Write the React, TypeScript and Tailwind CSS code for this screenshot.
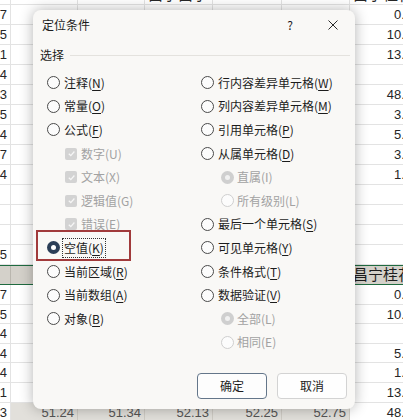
import React from "react";

type Opt = {
  t: string;
  k: string;
  type?: "radio" | "check" | "sub";
  disabled?: boolean;
  checked?: boolean;
  focus?: boolean;
};

const leftOpts: Opt[] = [
  { t: "注释", k: "N" },
  { t: "常量", k: "O" },
  { t: "公式", k: "F" },
  { t: "数字", k: "U", type: "check", disabled: true },
  { t: "文本", k: "X", type: "check", disabled: true },
  { t: "逻辑值", k: "G", type: "check", disabled: true },
  { t: "错误", k: "E", type: "check", disabled: true },
  { t: "空值", k: "K", checked: true, focus: true },
  { t: "当前区域", k: "R" },
  { t: "当前数组", k: "A" },
  { t: "对象", k: "B" },
];

const rightOpts: Opt[] = [
  { t: "行内容差异单元格", k: "W" },
  { t: "列内容差异单元格", k: "M" },
  { t: "引用单元格", k: "P" },
  { t: "从属单元格", k: "D" },
  { t: "直属", k: "I", type: "sub", disabled: true, checked: true },
  { t: "所有级别", k: "L", type: "sub", disabled: true },
  { t: "最后一个单元格", k: "S" },
  { t: "可见单元格", k: "Y" },
  { t: "条件格式", k: "T" },
  { t: "数据验证", k: "V" },
  { t: "全部", k: "L", type: "sub", disabled: true, checked: true },
  { t: "相同", k: "E", type: "sub", disabled: true },
];

// sheet rows: [colA, colG]
const topRows: [string, string][] = [
  ["7", "0.7"],
  ["5", "10.1"],
  ["1", "13.3"],
  ["4", "7"],
  ["3", "48.1"],
  ["5", "3.2"],
  ["4", "5.4"],
  ["7", "3.5"],
  ["4", "1.0"],
  ["", ""],
  ["", ""],
  ["", ""],
  ["5", ""],
];

const bottomRows: [string, string][] = [
  ["7", "0.7"],
  ["5", "10.1"],
  ["4", "7"],
  ["4", "5.4"],
  ["4", "1.0"],
  ["1", "13.3"],
];

const cols = "grid grid-cols-[11px_67px_67px_68px_69px_68px_63px]";

const Radio = ({ checked, disabled }: { checked?: boolean; disabled?: boolean }) => {
  if (checked && disabled) {
    return (
      <span className="w-[13px] h-[13px] rounded-full bg-[#cfcfcf] flex items-center justify-center shrink-0">
        <span className="w-[5px] h-[5px] rounded-full bg-[#f1f1f1]" />
      </span>
    );
  }
  if (checked) {
    return (
      <span className="w-[13px] h-[13px] rounded-full bg-[#2b3e57] flex items-center justify-center shrink-0">
        <span className="w-[5px] h-[5px] rounded-full bg-white" />
      </span>
    );
  }
  return (
    <span
      className={
        "w-[13px] h-[13px] rounded-full border shrink-0 bg-[#fcfcfc] " +
        (disabled ? "border-[#cfcfcf]" : "border-[#4a4a4a]")
      }
    />
  );
};

const Check = () => (
  <span className="w-[12px] h-[12px] rounded-[2px] bg-[#d3d3d3] flex items-center justify-center shrink-0">
    <svg width="9" height="9" viewBox="0 0 10 10">
      <path d="M2 5.2 L4.2 7.3 L8.2 2.8" fill="none" stroke="#f6f6f6" strokeWidth="1.4" />
    </svg>
  </span>
);

const OptionRow = ({ o }: { o: Opt }) => {
  const type = o.type || "radio";
  return (
    <div
      className={
        "h-[23.6px] flex items-center " +
        (type === "check" ? "ml-[18px] gap-[4px]" : type === "sub" ? "ml-[20px] gap-[3px]" : "gap-[4px]")
      }
    >
      {type === "check" ? <Check /> : <Radio checked={o.checked} disabled={o.disabled} />}
      <span
        className={
          "leading-[16px] whitespace-nowrap " +
          (o.disabled ? "text-[#a2a2a2]" : "text-[#1c1c1c]") +
          (o.focus ? " outline outline-1 outline-dotted outline-[#333] outline-offset-[1px]" : "")
        }
      >
        {o.t}({o.disabled ? o.k : <u className="underline-offset-[2px]">{o.k}</u>})
      </span>
    </div>
  );
};

const SheetRow = ({ a, g, h = "h-[20px]" }: { a: string; g: string; h?: string }) => (
  <div className={cols + " " + h + " border-b border-[#e3e3e3]"}>
    <div className="border-r border-[#e3e3e3] text-right pr-[3px] flex items-center justify-end">{a}</div>
    <div className="border-r border-[#e3e3e3]" />
    <div className="border-r border-[#e3e3e3]" />
    <div className="border-r border-[#e3e3e3]" />
    <div className="border-r border-[#e3e3e3]" />
    <div className="border-r border-[#e3e3e3]" />
    <div className="flex items-center justify-end pr-[1px]">{g}</div>
  </div>
);

export default function App() {
  return (
    <div className="relative w-[403px] h-[420px] overflow-hidden bg-white">
      {/* spreadsheet behind */}
      <div className="flex flex-col -mt-[15px] text-[13px] text-[#262626] font-['Liberation_Sans','Noto_Sans_CJK_SC',sans-serif]">
        <div className={cols + " h-[20px] border-b border-[#e3e3e3]"}>
          <div className="border-r border-[#e3e3e3]" />
          <div className="border-r border-[#e3e3e3]" />
          <div className="border-r border-[#e3e3e3]" />
          <div className="border-r border-[#e3e3e3] pl-[3px] whitespace-nowrap overflow-visible text-[15px] leading-[20px]">
            昌宁昌宁19
          </div>
          <div className="border-r border-[#e3e3e3]" />
          <div className="border-r border-[#e3e3e3]" />
          <div className="pl-[3px] whitespace-nowrap text-[15px] leading-[20px]">昌宁桂花</div>
        </div>
        {topRows.map(([a, g], i) => (
          <SheetRow key={i} a={a} g={g} />
        ))}
        <div className={cols + " h-[20px] bg-[#d4d1ca] border-y border-[#1f6b40]"}>
          <div className="border-r border-[#b9b6ae]" />
          <div className="border-r border-[#b9b6ae]" />
          <div className="border-r border-[#b9b6ae]" />
          <div className="border-r border-[#b9b6ae]" />
          <div className="border-r border-[#b9b6ae]" />
          <div className="border-r border-[#b9b6ae]" />
          <div className="pl-[3px] whitespace-nowrap text-[15px] leading-[18px] text-[#1d1d1d]">昌宁桂花</div>
        </div>
        {bottomRows.map(([a, g], i) => (
          <SheetRow key={i} a={a} g={g} h="h-[19.6px]" />
        ))}
        <div className={cols + " h-[19.6px] border-b border-[#e3e3e3]"}>
          <div className="border-r border-[#e3e3e3] flex items-center justify-end pr-[3px]">3</div>
          {["51.24", "51.34", "52.13", "52.25", "52.75"].map((v) => (
            <div key={v} className="border-r border-[#cfccc5] bg-[#e2e0db] flex items-center justify-end pr-[3px] text-[#555]">
              {v}
            </div>
          ))}
          <div className="flex items-center justify-end pr-[1px]">48.1</div>
        </div>
      </div>

      {/* dialog */}
      <div className="absolute left-[33px] top-[10px] w-[322px] h-[399px] rounded-[8px] bg-[#f9f8f6] shadow-[0_0_14px_rgba(0,0,0,0.3)] flex flex-col text-[12px] font-['Noto_Sans_CJK_SC',sans-serif]">
        <div className="h-[30px] flex items-center pl-[9px] pr-[17px] text-[#1c1c1c]">
          <span>定位条件</span>
          <span className="ml-auto text-[12px]">?</span>
          <svg className="ml-[35px]" width="10" height="10" viewBox="0 0 10 10">
            <path d="M0.5 0.5 L9.5 9.5 M9.5 0.5 L0.5 9.5" stroke="#2a2a2a" strokeWidth="1" />
          </svg>
        </div>
        <div className="mt-[7px] h-[16px] flex items-center pl-[7px] pr-[5px] gap-[6px] text-[#1c1c1c]">
          <span>选择</span>
          <span className="flex-1 h-px bg-[#e4e2de]" />
        </div>
        <div className="mt-[8px] pl-[14px] grid grid-cols-[154px_1fr]">
          <div className="flex flex-col">
            {leftOpts.map((o) => (
              <OptionRow key={o.t} o={o} />
            ))}
          </div>
          <div className="flex flex-col">
            {rightOpts.map((o) => (
              <OptionRow key={o.t} o={o} />
            ))}
          </div>
        </div>
        <div className="mt-auto flex justify-end gap-[10px] pr-[8px] pb-[10px]">
          <button className="w-[70px] h-[26px] rounded-[4px] border border-[#64768a] bg-[#fdfdfd] text-[#1c1c1c]">
            确定
          </button>
          <button className="w-[70px] h-[26px] rounded-[4px] border border-[#d3d3d3] bg-[#fefefe] text-[#1c1c1c]">
            取消
          </button>
        </div>
        <div className="absolute left-[3px] top-[220px] w-[95px] h-[31px] border-2 border-[#a13a3b]" />
      </div>
    </div>
  );
}
